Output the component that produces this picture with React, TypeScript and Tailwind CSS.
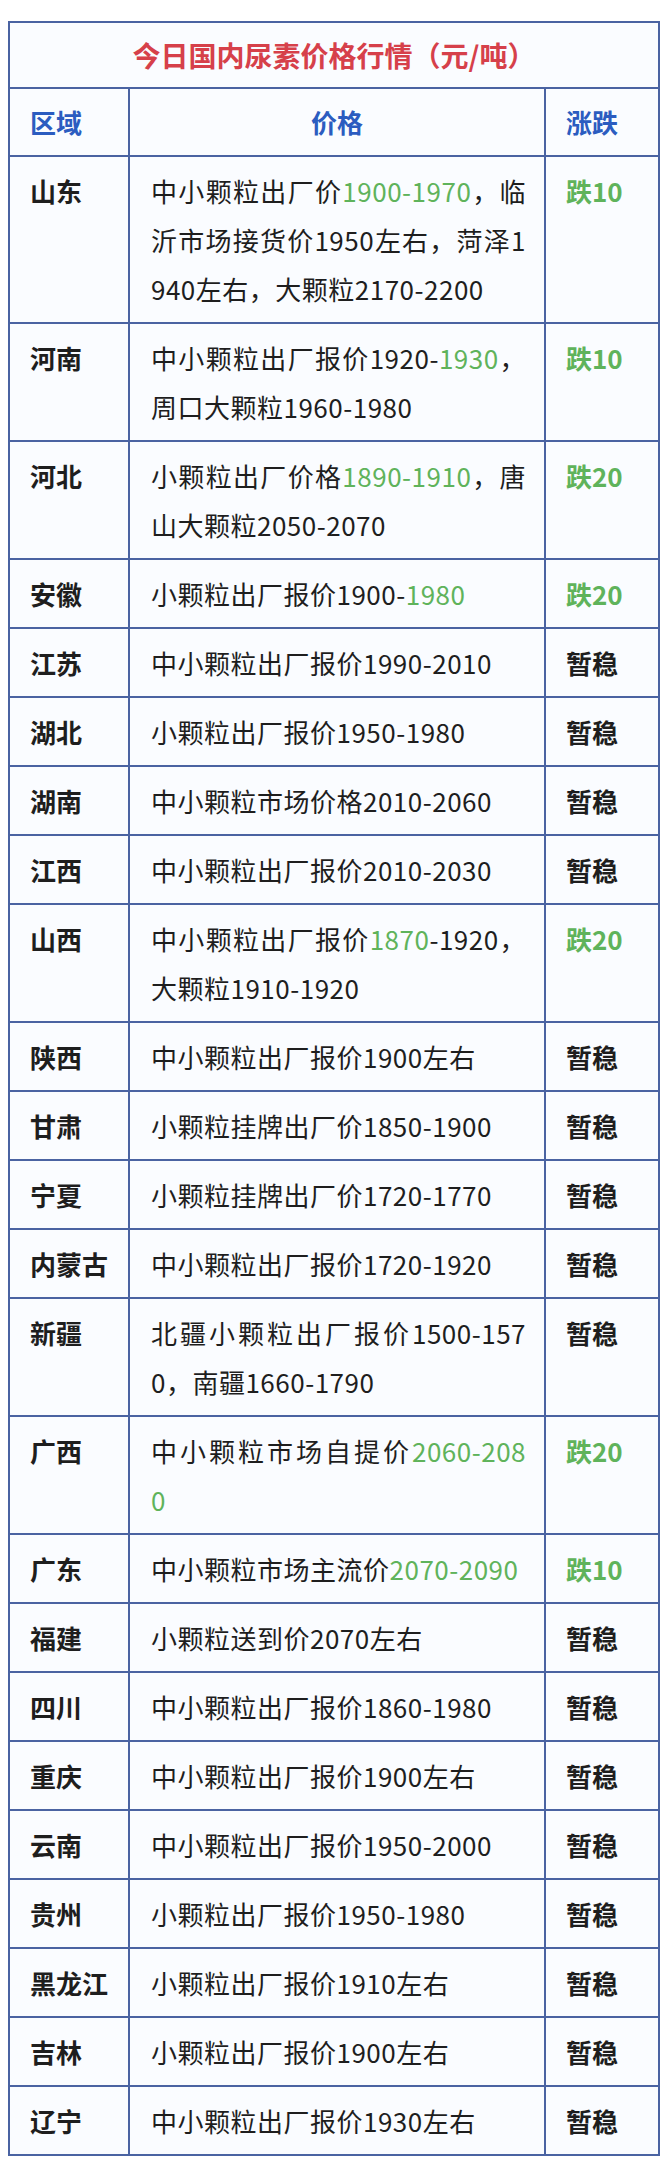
import React from 'react';

type Seg = { t: string; g?: boolean };
type Row = { r: string; lines: Seg[][]; c: string; cg?: boolean };

const s = (t: string, g = false): Seg => ({ t, g });
const one = (t: string): Seg[][] => [[s(t)]];

const rows: Row[] = [
  {
    r: '山东',
    lines: [
      [s('中小颗粒出厂价'), s('1900-1970', true), s('，临')],
      [s('沂市场接货价1950左右，菏泽1')],
      [s('940左右，大颗粒2170-2200')],
    ],
    c: '跌10',
    cg: true,
  },
  {
    r: '河南',
    lines: [
      [s('中小颗粒出厂报价1920-'), s('1930', true), s('，')],
      [s('周口大颗粒1960-1980')],
    ],
    c: '跌10',
    cg: true,
  },
  {
    r: '河北',
    lines: [
      [s('小颗粒出厂价格'), s('1890-1910', true), s('，唐')],
      [s('山大颗粒2050-2070')],
    ],
    c: '跌20',
    cg: true,
  },
  { r: '安徽', lines: [[s('小颗粒出厂报价1900-'), s('1980', true)]], c: '跌20', cg: true },
  { r: '江苏', lines: one('中小颗粒出厂报价1990-2010'), c: '暂稳' },
  { r: '湖北', lines: one('小颗粒出厂报价1950-1980'), c: '暂稳' },
  { r: '湖南', lines: one('中小颗粒市场价格2010-2060'), c: '暂稳' },
  { r: '江西', lines: one('中小颗粒出厂报价2010-2030'), c: '暂稳' },
  {
    r: '山西',
    lines: [
      [s('中小颗粒出厂报价'), s('1870', true), s('-1920，')],
      [s('大颗粒1910-1920')],
    ],
    c: '跌20',
    cg: true,
  },
  { r: '陕西', lines: one('中小颗粒出厂报价1900左右'), c: '暂稳' },
  { r: '甘肃', lines: one('小颗粒挂牌出厂价1850-1900'), c: '暂稳' },
  { r: '宁夏', lines: one('小颗粒挂牌出厂价1720-1770'), c: '暂稳' },
  { r: '内蒙古', lines: one('中小颗粒出厂报价1720-1920'), c: '暂稳' },
  {
    r: '新疆',
    lines: [[s('北疆小颗粒出厂报价1500-157')], [s('0，南疆1660-1790')]],
    c: '暂稳',
  },
  {
    r: '广西',
    lines: [[s('中小颗粒市场自提价'), s('2060-208', true)], [s('0', true)]],
    c: '跌20',
    cg: true,
  },
  { r: '广东', lines: [[s('中小颗粒市场主流价'), s('2070-2090', true)]], c: '跌10', cg: true },
  { r: '福建', lines: one('小颗粒送到价2070左右'), c: '暂稳' },
  { r: '四川', lines: one('中小颗粒出厂报价1860-1980'), c: '暂稳' },
  { r: '重庆', lines: one('中小颗粒出厂报价1900左右'), c: '暂稳' },
  { r: '云南', lines: one('中小颗粒出厂报价1950-2000'), c: '暂稳' },
  { r: '贵州', lines: one('小颗粒出厂报价1950-1980'), c: '暂稳' },
  { r: '黑龙江', lines: one('小颗粒出厂报价1910左右'), c: '暂稳' },
  { r: '吉林', lines: one('小颗粒出厂报价1900左右'), c: '暂稳' },
  { r: '辽宁', lines: one('中小颗粒出厂报价1930左右'), c: '暂稳' },
];

const cellB = 'border-2 border-[#4a63a2]';

export default function App() {
  return (
    <div className="w-[660px] min-h-[2174px] bg-white pt-[21px] font-['Noto_Sans_CJK_SC','Noto_Sans',sans-serif]">
      <table className="ml-[8px] w-[650px] table-fixed border-collapse bg-[#fafcff]">
        <colgroup>
          <col className="w-[120px]" />
          <col className="w-[416px]" />
          <col className="w-[114px]" />
        </colgroup>
        <thead>
          <tr>
            <th
              colSpan={3}
              className={`${cellB} h-[66px] text-center align-middle text-[28px] font-bold leading-[40px] text-[#d6404a]`}
            >
              今日国内尿素价格行情（元/吨）
            </th>
          </tr>
          <tr className="text-[26px] font-bold leading-[40px] text-[#2b5cc0]">
            <th className={`${cellB} h-[68px] pl-[20px] text-left align-middle`}>区域</th>
            <th className={`${cellB} h-[68px] text-center align-middle`}>价格</th>
            <th className={`${cellB} h-[68px] pl-[20px] text-left align-middle`}>涨跌</th>
          </tr>
        </thead>
        <tbody className="text-[26px] leading-[49px] text-[#1e1e1e]">
          {rows.map((row) => (
            <tr key={row.r}>
              <td className={`${cellB} py-[9px] pl-[20px] align-top font-bold`}>{row.r}</td>
              <td className={`${cellB} py-[9px] pl-[21px] pr-[18px] align-top tracking-[0.5px]`}>
                {row.lines.map((line, i) => (
                  <div
                    key={i}
                    className={i < row.lines.length - 1 ? 'text-justify [text-align-last:justify]' : 'text-left'}
                  >
                    {line.map((seg, j) => (
                      <span key={j} className={seg.g ? 'text-[#5fb35b]' : undefined}>
                        {seg.t}
                      </span>
                    ))}
                  </div>
                ))}
              </td>
              <td
                className={`${cellB} py-[9px] pl-[20px] align-top font-bold ${
                  row.cg ? 'text-[#5fb35b]' : 'text-[#1e1e1e]'
                }`}
              >
                {row.c}
              </td>
            </tr>
          ))}
        </tbody>
      </table>
    </div>
  );
}
